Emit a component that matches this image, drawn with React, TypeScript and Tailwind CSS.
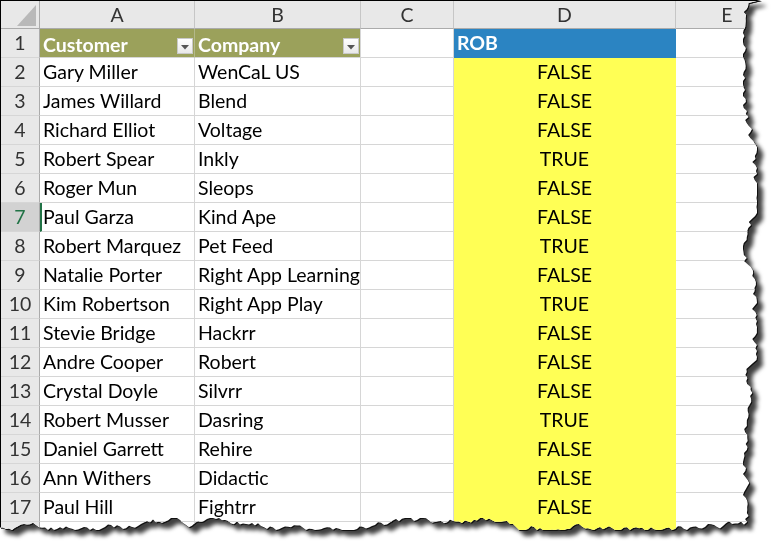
import React from 'react';

const data: [string, string, string][] = [
  ['Gary Miller', 'WenCaL US', 'FALSE'],
  ['James Willard', 'Blend', 'FALSE'],
  ['Richard Elliot', 'Voltage', 'FALSE'],
  ['Robert Spear', 'Inkly', 'TRUE'],
  ['Roger Mun', 'Sleops', 'FALSE'],
  ['Paul Garza', 'Kind Ape', 'FALSE'],
  ['Robert Marquez', 'Pet Feed', 'TRUE'],
  ['Natalie Porter', 'Right App Learning', 'FALSE'],
  ['Kim Robertson', 'Right App Play', 'TRUE'],
  ['Stevie Bridge', 'Hackrr', 'FALSE'],
  ['Andre Cooper', 'Robert', 'FALSE'],
  ['Crystal Doyle', 'Silvrr', 'FALSE'],
  ['Robert Musser', 'Dasring', 'TRUE'],
  ['Daniel Garrett', 'Rehire', 'FALSE'],
  ['Ann Withers', 'Didactic', 'FALSE'],
  ['Paul Hill', 'Fightrr', 'FALSE'],
  ['', '', ''],
];

// seeded noise so the torn edge is the same every render
function makeRng(seed: number) {
  let s = seed;
  return () => {
    s = (s * 16807) % 2147483647;
    return (s - 1) / 2147483646;
  };
}

function tornClip() {
  const r = makeRng(11);
  const pts: string[] = ['0px 0px', '761px 0px'];
  let x = 752;
  for (let y = 3; y <= 522; y += 3) {
    x += (r() - 0.5) * 7;
    x = Math.max(743, Math.min(757, x));
    pts.push(`${x.toFixed(1)}px ${y}px`);
  }
  let y = 523;
  for (let xx = Math.round(x) - 3; xx > 0; xx -= 3) {
    y += (r() - 0.5) * 6;
    y = Math.max(518, Math.min(530, y));
    pts.push(`${xx}px ${y.toFixed(1)}px`);
  }
  pts.push(`0px ${y.toFixed(1)}px`);
  return `polygon(${pts.join(',')})`;
}

const FilterButton = () => (
  <div className="ml-auto mr-[1px] mt-[9px] flex h-[16px] w-[16px] shrink-0 items-center justify-center border border-[#c9c9c9] bg-gradient-to-b from-white to-[#e9e9e9]">
    <svg width="8" height="5" viewBox="0 0 8 5" className="mt-[3px]">
      <path d="M0 0h8L4 4.5z" fill="#555" />
    </svg>
  </div>
);

const cell = 'h-[29px] border-r border-b border-[#d6d6d6] flex items-center overflow-hidden whitespace-nowrap';
const colHead = 'h-[28px] border-r border-b border-r-[#c6c6c6] border-b-[#ababab] bg-[#e8e8e8] flex items-center justify-center text-[#333]';

export default function App() {
  return (
    <div className="h-[551px] w-[779px] overflow-hidden bg-white font-['Lato','Liberation_Sans',sans-serif] text-[19.5px]">
      <div className="[filter:drop-shadow(1px_1px_0_#111)_drop-shadow(5px_5px_2px_rgba(0,0,0,0.75))]">
        <div
          className="grid w-[779px] grid-cols-[39px_155px_166px_93px_222px_1fr] border-t border-l border-black bg-white text-black"
          style={{ clipPath: tornClip() }}
        >
          {/* column header row */}
          <div className="relative h-[28px] border-r border-b border-r-[#ababab] border-b-[#ababab] bg-[#e8e8e8]">
            <svg className="absolute left-[16px] top-[4px]" width="20" height="21" viewBox="0 0 20 21">
              <path d="M0 21H19V0z" fill="#b9b9b9" />
            </svg>
          </div>
          {['A', 'B', 'C', 'D', 'E'].map((l) => (
            <div key={l} className={colHead}>
              {l}
            </div>
          ))}

          {/* row 1 - table headers */}
          <div className="flex h-[29px] items-center justify-center border-r border-b border-r-[#ababab] border-b-[#d6d6d6] bg-[#e8e8e8] text-[#333]">
            1
          </div>
          <div className="flex h-[29px] items-start border-r border-b border-r-[#b3b88a] border-b-[#d6d6d6] bg-[#9ba15b] pl-[3px] font-bold text-white">
            <span className="mt-[1px]">Customer</span>
            <FilterButton />
          </div>
          <div className="flex h-[29px] items-start border-r border-b border-r-[#d6d6d6] border-b-[#d6d6d6] bg-[#9ba15b] pl-[3px] font-bold text-white">
            <span className="mt-[1px]">Company</span>
            <FilterButton />
          </div>
          <div className={cell} />
          <div className={`${cell} border-b-[#2b84c2] border-r-[#2b84c2] bg-[#2b84c2] pl-[3px] font-bold text-white`}>ROB</div>
          <div className={cell} />

          {data.map(([name, company, rob], i) => {
            const n = i + 2;
            const selected = n === 7;
            return (
              <React.Fragment key={n}>
                <div
                  className={`flex h-[29px] items-center justify-center border-r border-b border-r-[#ababab] border-b-[#d6d6d6] ${
                    selected ? 'bg-[#d2d2d2] text-[#217346]' : 'bg-[#e8e8e8] text-[#333]'
                  }`}
                >
                  {n}
                </div>
                <div className={`${cell} ${selected ? 'border-l-2 border-l-[#217346] pl-[1px]' : 'pl-[3px]'}`}>{name}</div>
                <div className={`${cell} pl-[3px]`}>{company}</div>
                <div className={cell} />
                <div className={`${cell} justify-center border-b-[#ffff55] border-r-[#ffff55] bg-[#ffff55]`}>{rob}</div>
                <div className={cell} />
              </React.Fragment>
            );
          })}
        </div>
      </div>
    </div>
  );
}
